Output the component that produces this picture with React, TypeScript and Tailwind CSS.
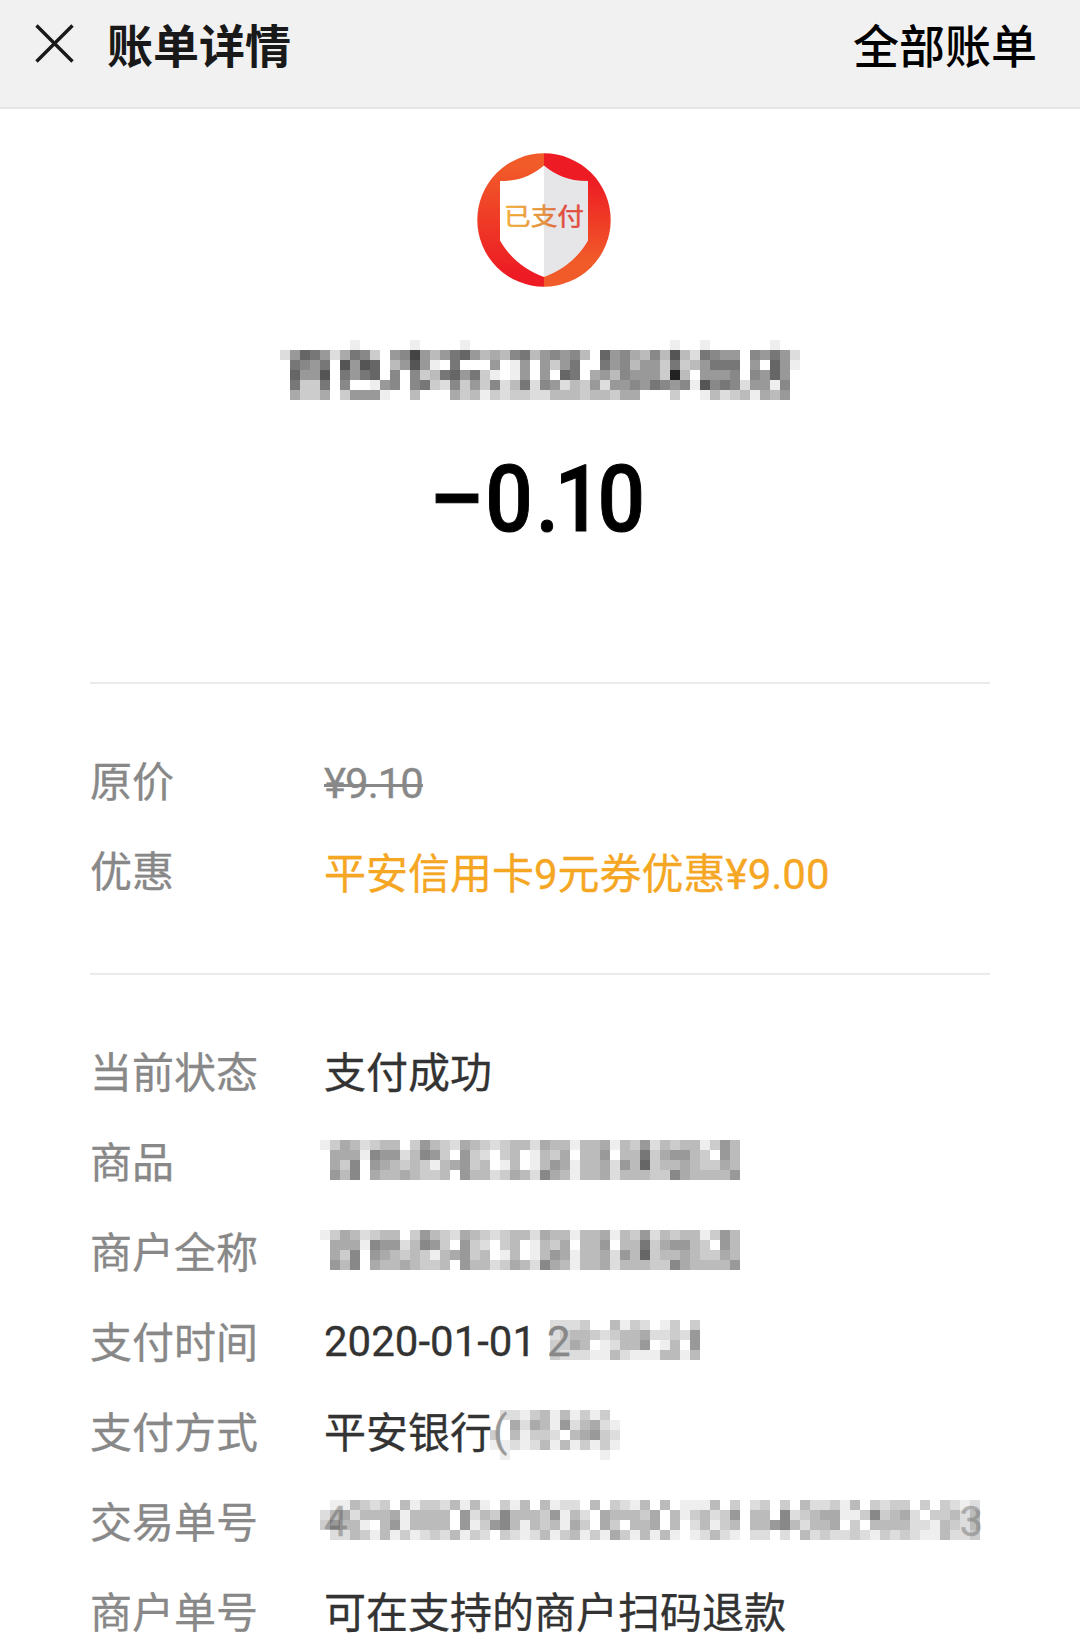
import type { ReactNode } from "react";

const CELL = 10;

// every character is one gray cell: 0 = black, f = white
const nameMosaic = [
  "fffffffefffffeffffefffffff" + "fffffffffffffeffeffffffeff",
  "d9679da78cf9849b9769bab87b" + "9898bf698ab8b5bd7899f8979d",
  "f7897f5956fb959ef7fff9fe9f" + "9c97ff798b99c7cb9777f9f69e",
  "f6995f7976f8f8cb7697cefe9f" + "9f67fa9b8999c2bf9998f8969f",
  "f7cc7f8ffe98f87cd8c9c8db7d" + "89dbc9d99897898e5878d99e8f",
  "faccafc999effbfffacbecdccd" + "dbbbcbbcaafffcffebdcbeab9f",
];

const shopMosaic = [
  "ecabdcbbfc9bcdabcdcbbdabbebbaebc9dbcbbec9bf",
  "faaae899db89cf9cdfcbfebcafbb9fbb7ca99bcf9bf",
  "fac8f9abcbceba9cbfebfeb9aebbad9b6cbbabccabf",
  "f9b8fabbabccbf9bbdcabd8abebbadbbbcc8abbbb9f",
];

const timeMosaic = [
  "dddcffbecdfecfc",
  "dcbbcdcbbaddcd9",
  "ccabfedbb9febf9",
  "cdddeebdeeebbeb",
];

const cardMosaic = [
  "fddecbebececf",
  "ffadabe9dbade",
  "cfbeccdfba9cd",
  "eededbebecece",
  "fefffffffffef",
];

const orderMosaic = [
  "feebcdcfbeccdbebefcebfbeddfbfcdeb" + "fbfeeebfcfdcfcfbddcebfcdccfcfcdedf",
  "dbadbbbaebbbbf9dbc8bbbc9ebdfabbbc" + "afbecbdc9fbbf8dcbaaeec8cbadfccbdbf",
  "c9bbefb9ebbbbf9ec98bebcbeacfacfbb" + "afbfdbecbfbb98bdbbafcfbbbbddebcdbf",
  "fddbcebecedcdbecdfcdedbecbeceaceb" + "ebefedbdefddfdfbdcddcdecdcdeebddcf",
];

function Mosaic({ rows, className = "" }: { rows: string[]; className?: string }) {
  const width = rows[0].length * CELL;
  const height = rows.length * CELL;
  return (
    <svg
      width={width}
      height={height}
      viewBox={`0 0 ${width} ${height}`}
      shapeRendering="crispEdges"
      className={`block shrink-0 ${className}`}
    >
      {rows.map((row, y) =>
        row.split("").map((c, x) =>
          c === "f" ? null : (
            <rect key={`${x}-${y}`} x={x * CELL} y={y * CELL} width={CELL} height={CELL} fill={`#${c}${c}${c}`} />
          )
        )
      )}
    </svg>
  );
}

function PaidLogo() {
  return (
    <svg width="134" height="134" viewBox="0 0 134 134" className="ml-2 block">
      <defs>
        <linearGradient id="left" x1="0" y1="0" x2="0" y2="1">
          <stop offset="0.1" stopColor="#f15a29" />
          <stop offset="0.9" stopColor="#ed1c24" />
        </linearGradient>
        <linearGradient id="right" x1="0" y1="0" x2="0" y2="1">
          <stop offset="0.2" stopColor="#ed1c24" />
          <stop offset="0.8" stopColor="#f15a29" />
        </linearGradient>
        <linearGradient id="word" x1="0" y1="0" x2="1" y2="0">
          <stop offset="0" stopColor="#f3ae3a" />
          <stop offset="0.5" stopColor="#e2923c" />
          <stop offset="0.75" stopColor="#e04a3c" />
          <stop offset="1" stopColor="#e0523c" />
        </linearGradient>
      </defs>
      <path d="M67 0.3A66.7 66.7 0 0 0 67 133.7Z" fill="url(#left)" />
      <path d="M67 0.3A66.7 66.7 0 0 1 67 133.7Z" fill="url(#right)" />
      <path d="M67 12.5C55 22 44 28 23 28V87.500C33 105 48 117 67 124Z" fill="#fff" />
      <path d="M67 12.5C79 22 90 28 111 28V87.500C101 105 86 117 67 124Z" fill="#e6e6e9" />
      <text
        transform="translate(27 72) scale(1 0.9)"
        fontSize="26"
        textLength="80"
        lengthAdjust="spacingAndGlyphs"
        fill="url(#word)"
        stroke="url(#word)"
        strokeWidth="0.5"
      >
        已支付
      </text>
    </svg>
  );
}

function Row({ label, children }: { label: string; children?: ReactNode }) {
  return (
    <div className="flex h-[90px] items-center">
      <div className="w-[234px] shrink-0 pt-[5px] text-[#888888]">{label}</div>
      <div className="flex items-center whitespace-pre">{children}</div>
    </div>
  );
}

export default function App() {
  return (
    <div className="h-[1652px] w-[1080px] overflow-hidden bg-white font-['Roboto','Noto_Sans_CJK_SC',sans-serif] text-[42px] leading-[60px] text-[#333333] [-webkit-text-stroke:0.3px]">
      <header className="flex h-[109px] items-center justify-between border-b-2 border-[#e4e4e4] bg-[#f1f1f1] pr-[43px] pb-[14px] pl-[35px] text-[46px]">
        <div className="flex items-center">
          <svg width="39" height="39" viewBox="0 0 39 39" className="mr-[33px] mb-[6px] block" stroke="#191919" strokeWidth="3.4">
            <path d="M1.5 1.5L37.5 37.5M37.5 1.500L1.500 37.5" />
          </svg>
          <h1 className="font-bold text-[#191919] [-webkit-text-stroke:0]">账单详情</h1>
        </div>
        <div className="font-medium text-black [-webkit-text-stroke:0]">全部账单</div>
      </header>

      <section className="flex h-[573px] flex-col items-center pt-11">
        <PaidLogo />
        <Mosaic rows={nameMosaic} className="mt-[53px]" />
        <div className="mt-[50px] flex h-[100px] scale-x-90 items-center pr-[7px] text-[93px] font-medium text-black [-webkit-text-stroke:1px]">
          <span className="mr-[11px] origin-left scale-x-[1.2]">−</span>
          <span>0</span>
          <span className="ml-[3px] tracking-[-5px]">.</span>
          <span className="tracking-[-5px]">1</span>
          <span>0</span>
        </div>
      </section>

      <section className="mx-[90px] h-[291px] border-t-2 border-[#ebebeb] pt-[51px]">
        <Row label="原价">
          <span className="pt-[7px] tracking-[-1px] text-[#888888] line-through decoration-[3px]">¥9.10</span>
        </Row>
        <Row label="优惠">
          <span className="pt-[9px] text-[#f5a623]">平安信用卡9元券优惠¥9.00</span>
        </Row>
      </section>

      <section className="mx-[90px] border-t-2 border-[#ebebeb] pt-[51px]">
        <Row label="当前状态">
          <span className="pt-[5px]">支付成功</span>
        </Row>
        <Row label="商品">
          <Mosaic rows={shopMosaic} className="mb-0.5 -ml-1" />
        </Row>
        <Row label="商户全称">
          <Mosaic rows={shopMosaic} className="mb-0.5 -ml-1" />
        </Row>
        <Row label="支付时间">
          <span className="w-[226px] pt-0.5">2020-01-01 </span>
          <div className="relative mb-0.5">
            <Mosaic rows={timeMosaic} />
            <span className="absolute -top-2 -left-[3px] text-[#888888]">2</span>
          </div>
        </Row>
        <Row label="支付方式">
          <span className="w-[166px] pt-[5px]">平安银行</span>
          <div className="relative mt-2">
            <Mosaic rows={cardMosaic} />
            <span className="absolute -top-2 left-[3px] text-[#999999]">(</span>
          </div>
        </Row>
        <Row label="交易单号">
          <div className="relative mb-0.5 -ml-1">
            <Mosaic rows={orderMosaic} />
            <span className="absolute -top-2 left-1 text-[#555555] opacity-40">4</span>
            <span className="absolute -top-2 right-[7px] text-[#777777] opacity-50">3</span>
          </div>
        </Row>
        <Row label="商户单号">
          <span className="pt-[5px]">可在支持的商户扫码退款</span>
        </Row>
      </section>
    </div>
  );
}
